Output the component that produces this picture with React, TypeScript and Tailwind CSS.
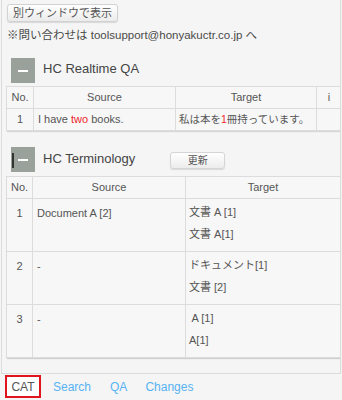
import React from 'react';

const FONT = "font-['Liberation_Sans','Noto_Sans_CJK_JP',sans-serif]";

const TERMS = [
  { no: 1, source: 'Document A [2]', targets: ['文書 A [1]', '文書 A[1]'] },
  { no: 2, source: '-', targets: ['ドキュメント[1]', '文書 [2]'] },
  { no: 3, source: '-', targets: [' A [1]', 'A[1]'] },
];

function Toggle({ cursor }: { cursor?: boolean }) {
  return (
    <div className="relative w-[24px] h-[25px] bg-[#9aa09a] flex items-center justify-center shrink-0">
      {cursor && <div className="absolute left-[1px] top-[6px] w-[2px] h-[15px] bg-[#333]" />}
      <div className="w-[10px] h-[2px] bg-white" />
    </div>
  );
}

export default function App() {
  return (
    <div className={`${FONT} w-[342px] h-[400px] bg-[#f5f5f5] text-[#444] flex flex-col overflow-hidden`}>
      {/* Main panel */}
      <div className="h-[374px] ml-[1px] mr-[1px] border-x border-b border-[#dcdcdc] flex flex-col overflow-hidden shrink-0">
        <div className="flex pl-[5px] pt-[4px]">
          <button className="h-[18px] w-[111px] text-[11px] text-[#555] border border-[#d2d2d2] rounded-[3px] bg-gradient-to-b from-[#ffffff] to-[#ebebeb] shadow-[0_1px_1px_rgba(0,0,0,0.12)] leading-none">
            別ウィンドウで表示
          </button>
        </div>
        <div className="pl-[5px] mt-[6px] text-[11.5px] leading-[14px] text-[#4a4a4a]">
          ※問い合わせは toolsupport@honyakuctr.co.jp へ
        </div>

        {/* HC Realtime QA */}
        <div className="flex items-center pl-[9px] mt-[16px] h-[25px]">
          <Toggle />
          <span className="ml-[8px] text-[13px] text-[#444] leading-none -mt-[5px]">HC Realtime QA</span>
        </div>
        <div className="pl-[4px] mt-[3px]">
          <table className="border-collapse text-[11px] text-[#555] bg-[#f7f7f7] shadow-[1px_1px_1px_rgba(0,0,0,0.12)] table-fixed w-[335px]">
            <colgroup>
              <col className="w-[27px]" />
              <col className="w-[142px]" />
              <col className="w-[141px]" />
              <col className="w-[25px]" />
            </colgroup>
            <thead>
              <tr className="h-[22px]">
                <th className="border border-[#dcdcdc] font-normal text-center">No.</th>
                <th className="border border-[#dcdcdc] font-normal text-center">Source</th>
                <th className="border border-[#dcdcdc] font-normal text-center">Target</th>
                <th className="border border-[#dcdcdc] font-normal text-center">i</th>
              </tr>
            </thead>
            <tbody>
              <tr className="h-[22px]">
                <td className="border border-[#dcdcdc] text-center">1</td>
                <td className="border border-[#dcdcdc] pl-[4px]">
                  I have <span className="text-[#f0282d]">two</span> books.
                </td>
                <td className="border border-[#dcdcdc] pl-[3px] whitespace-nowrap text-[10.5px]">
                  私は本を<span className="text-[#f0282d]">1</span>冊持っています。
                </td>
                <td className="border border-[#dcdcdc]"></td>
              </tr>
            </tbody>
          </table>
        </div>

        {/* HC Terminology */}
        <div className="flex items-center pl-[9px] mt-[16px] h-[25px]">
          <Toggle cursor />
          <span className="ml-[8px] text-[13px] text-[#444] leading-none -mt-[3px]">HC Terminology</span>
          <button className="ml-[35px] mt-[2px] h-[17px] w-[55px] text-[10px] text-[#555] border border-[#d5d5d5] rounded-[3px] bg-gradient-to-b from-[#ffffff] to-[#ececec] shadow-[0_1px_1px_rgba(0,0,0,0.12)] leading-none">
            更新
          </button>
        </div>
        <div className="pl-[4px] mt-[4px]">
          <table className="border-collapse text-[11px] text-[#555] bg-[#f7f7f7] shadow-[1px_1px_1px_rgba(0,0,0,0.15)] table-fixed w-[334px]">
            <colgroup>
              <col className="w-[26px]" />
              <col className="w-[153px]" />
              <col className="w-[155px]" />
            </colgroup>
            <thead>
              <tr className="h-[22px]">
                <th className="border border-[#dcdcdc] font-normal text-center">No.</th>
                <th className="border border-[#dcdcdc] font-normal text-center">Source</th>
                <th className="border border-[#dcdcdc] font-normal text-center">Target</th>
              </tr>
            </thead>
            <tbody>
              {TERMS.map((t) => (
                <tr key={t.no} className="h-[53px] align-top">
                  <td className="border border-[#dcdcdc] text-center pt-[6px]">{t.no}</td>
                  <td className="border border-[#dcdcdc] pl-[4px] pt-[6px]">{t.source}</td>
                  <td className="border border-[#dcdcdc] pl-[3px] pt-[6px]">
                    {t.targets.map((x, i) => (
                      <div key={i} className="h-[22px] leading-[14px] whitespace-pre">{x}</div>
                    ))}
                  </td>
                </tr>
              ))}
            </tbody>
          </table>
        </div>
      </div>

      {/* Bottom tabs */}
      <div className="flex items-center pl-[5px] pt-[1px] text-[12px]">
        <div className="w-[36px] h-[23px] border-2 border-[#e0141e] bg-white flex items-center justify-center text-[#555]">
          CAT
        </div>
        <span className="ml-[12px] text-[#55b3f3]">Search</span>
        <span className="ml-[19px] text-[#55b3f3]">QA</span>
        <span className="ml-[18px] text-[#55b3f3]">Changes</span>
      </div>
    </div>
  );
}
